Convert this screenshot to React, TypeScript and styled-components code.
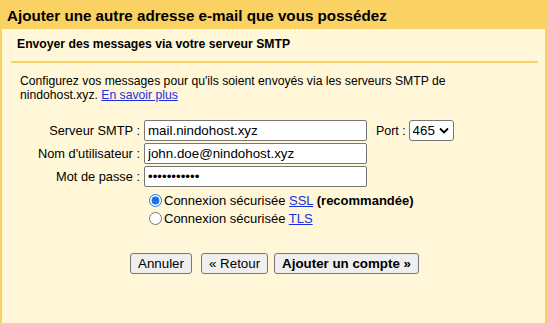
import * as React from 'react';
import styled, { createGlobalStyle } from 'styled-components';

const ORANGE = '#fad163';
const CREAM = '#fff7d7';
const LINK = '#1a2fe0';

const GlobalStyle = createGlobalStyle`
    html, body {
        margin: 0;
        padding: 0;
        background: ${CREAM};
    }
    body {
        font-family: "Liberation Sans", Arial, sans-serif;
        color: #000;
    }
`;

const Page = styled.div`
    width: 548px;
    height: 323px;
    display: flex;
    flex-direction: column;
    overflow: hidden;
`;

const TitleBar = styled.div`
    height: 29px;
    flex: none;
    background: ${ORANGE};
    padding: 0 7px;
    font-size: 15.2px;
    font-weight: bold;
    line-height: 31px;
    white-space: nowrap;
`;

const Panel = styled.div`
    flex: 1;
    background: ${CREAM};
    border-left: 2px solid ${ORANGE};
    border-right: 3px solid ${ORANGE};
    display: flex;
    flex-direction: column;
`;

const SectionHead = styled.div`
    padding: 7px 0 9px 15px;
    font-size: 12.2px;
    font-weight: bold;
    line-height: 16px;
`;

const Rule = styled.div`
    height: 2px;
    margin: 0 7px 0 9px;
    background: ${ORANGE};
`;

const Intro = styled.p`
    margin: 11px 20px 0 18px;
    font-size: 12.2px;
    line-height: 14px;
`;

const Link = styled.a`
    color: ${LINK};
    text-decoration: underline;
`;

const Form = styled.div`
    display: grid;
    grid-template-columns: 138px auto;
    column-gap: 4px;
    row-gap: 2px;
    margin-top: 18px;
    align-items: center;
`;

const Label = styled.label`
    font-size: 12.8px;
    text-align: right;
    white-space: nowrap;
`;

const FieldCell = styled.div`
    display: flex;
    align-items: center;
`;

const TextInput = styled.input`
    box-sizing: border-box;
    width: 223px;
    height: 21px;
    margin: 0;
    padding: 0 3px;
    border: 1px solid #767676;
    border-radius: 2px;
    background: #fff;
    font-family: "Liberation Sans", Arial, sans-serif;
    font-size: 13.333px;
    color: #000;
`;

const PortLabel = styled.label`
    font-size: 12.4px;
    margin: 0 3px 0 9px;
`;

const SelectWrap = styled.span`
    position: relative;
    display: inline-flex;
`;

const PortSelect = styled.select`
    box-sizing: border-box;
    appearance: none;
    -webkit-appearance: none;
    width: 45px;
    height: 21px;
    margin: 0;
    padding: 0 0 0 3px;
    border: 1px solid #767676;
    border-radius: 3px;
    background: #fff;
    font-family: "Liberation Sans", Arial, sans-serif;
    font-size: 13.333px;
    color: #000;
`;

const Chevron = styled.svg`
    position: absolute;
    right: 5px;
    top: 7px;
    pointer-events: none;
`;

const Options = styled.div`
    grid-column: 2;
    margin-top: 2px;
    display: flex;
    flex-direction: column;
`;

const RadioRow = styled.label`
    display: flex;
    align-items: center;
    height: 18px;
    font-size: 13px;
    white-space: nowrap;
`;

const Radio = styled.input`
    width: 13px;
    height: 13px;
    margin: 0 2px 0 5px;
    accent-color: #1a73e8;
`;

const Buttons = styled.div`
    display: flex;
    justify-content: center;
    gap: 6px;
    margin-top: 26px;
    padding-left: 2px;
`;

const Button = styled.button<{ $primary?: boolean; $spaced?: boolean }>`
    box-sizing: border-box;
    height: 21px;
    margin: 0 ${(p) => (p.$spaced ? '3px' : '0')} 0 0;
    padding: 0 7px;
    border: 1px solid #767676;
    border-radius: 3px;
    background: #efefef;
    font-family: "Liberation Sans", Arial, sans-serif;
    font-size: 13.333px;
    font-weight: ${(p) => (p.$primary ? 'bold' : 'normal')};
    color: #000;
`;

export default function App() {
    const [secure, setSecure] = React.useState('ssl');

    return (
        <Page>
            <GlobalStyle />
            <TitleBar>Ajouter une autre adresse e-mail que vous possédez</TitleBar>
            <Panel>
                <SectionHead>Envoyer des messages via votre serveur SMTP</SectionHead>
                <Rule />
                <Intro>
                    Configurez vos messages pour qu'ils soient envoyés via les serveurs SMTP de
                    nindohost.xyz. <Link href="#">En savoir plus</Link>
                </Intro>
                <Form>
                    <Label htmlFor="smtp">Serveur SMTP :</Label>
                    <FieldCell>
                        <TextInput id="smtp" defaultValue="mail.nindohost.xyz" />
                        <PortLabel htmlFor="port">Port :</PortLabel>
                        <SelectWrap>
                            <PortSelect id="port" defaultValue="465">
                                <option value="25">25</option>
                                <option value="465">465</option>
                                <option value="587">587</option>
                            </PortSelect>
                            <Chevron width="10" height="7" viewBox="0 0 10 7">
                                <polyline points="1,1.5 5,5.5 9,1.5" fill="none" stroke="#000" strokeWidth="1.8" />
                            </Chevron>
                        </SelectWrap>
                    </FieldCell>
                    <Label htmlFor="user">Nom d'utilisateur :</Label>
                    <FieldCell>
                        <TextInput id="user" defaultValue="john.doe@nindohost.xyz" />
                    </FieldCell>
                    <Label htmlFor="pass">Mot de passe :</Label>
                    <FieldCell>
                        <TextInput id="pass" type="password" defaultValue="motdepasse1" />
                    </FieldCell>
                    <Options>
                        <RadioRow>
                            <Radio type="radio" name="secure" checked={secure === 'ssl'} onChange={() => setSecure('ssl')} />
                            <span>Connexion sécurisée <Link href="#">SSL</Link> <b>(recommandée)</b></span>
                        </RadioRow>
                        <RadioRow>
                            <Radio type="radio" name="secure" checked={secure === 'tls'} onChange={() => setSecure('tls')} />
                            <span>Connexion sécurisée <Link href="#">TLS</Link></span>
                        </RadioRow>
                    </Options>
                </Form>
                <Buttons>
                    <Button $spaced>Annuler</Button>
                    <Button>« Retour</Button>
                    <Button $primary>Ajouter un compte »</Button>
                </Buttons>
            </Panel>
        </Page>
    );
}
